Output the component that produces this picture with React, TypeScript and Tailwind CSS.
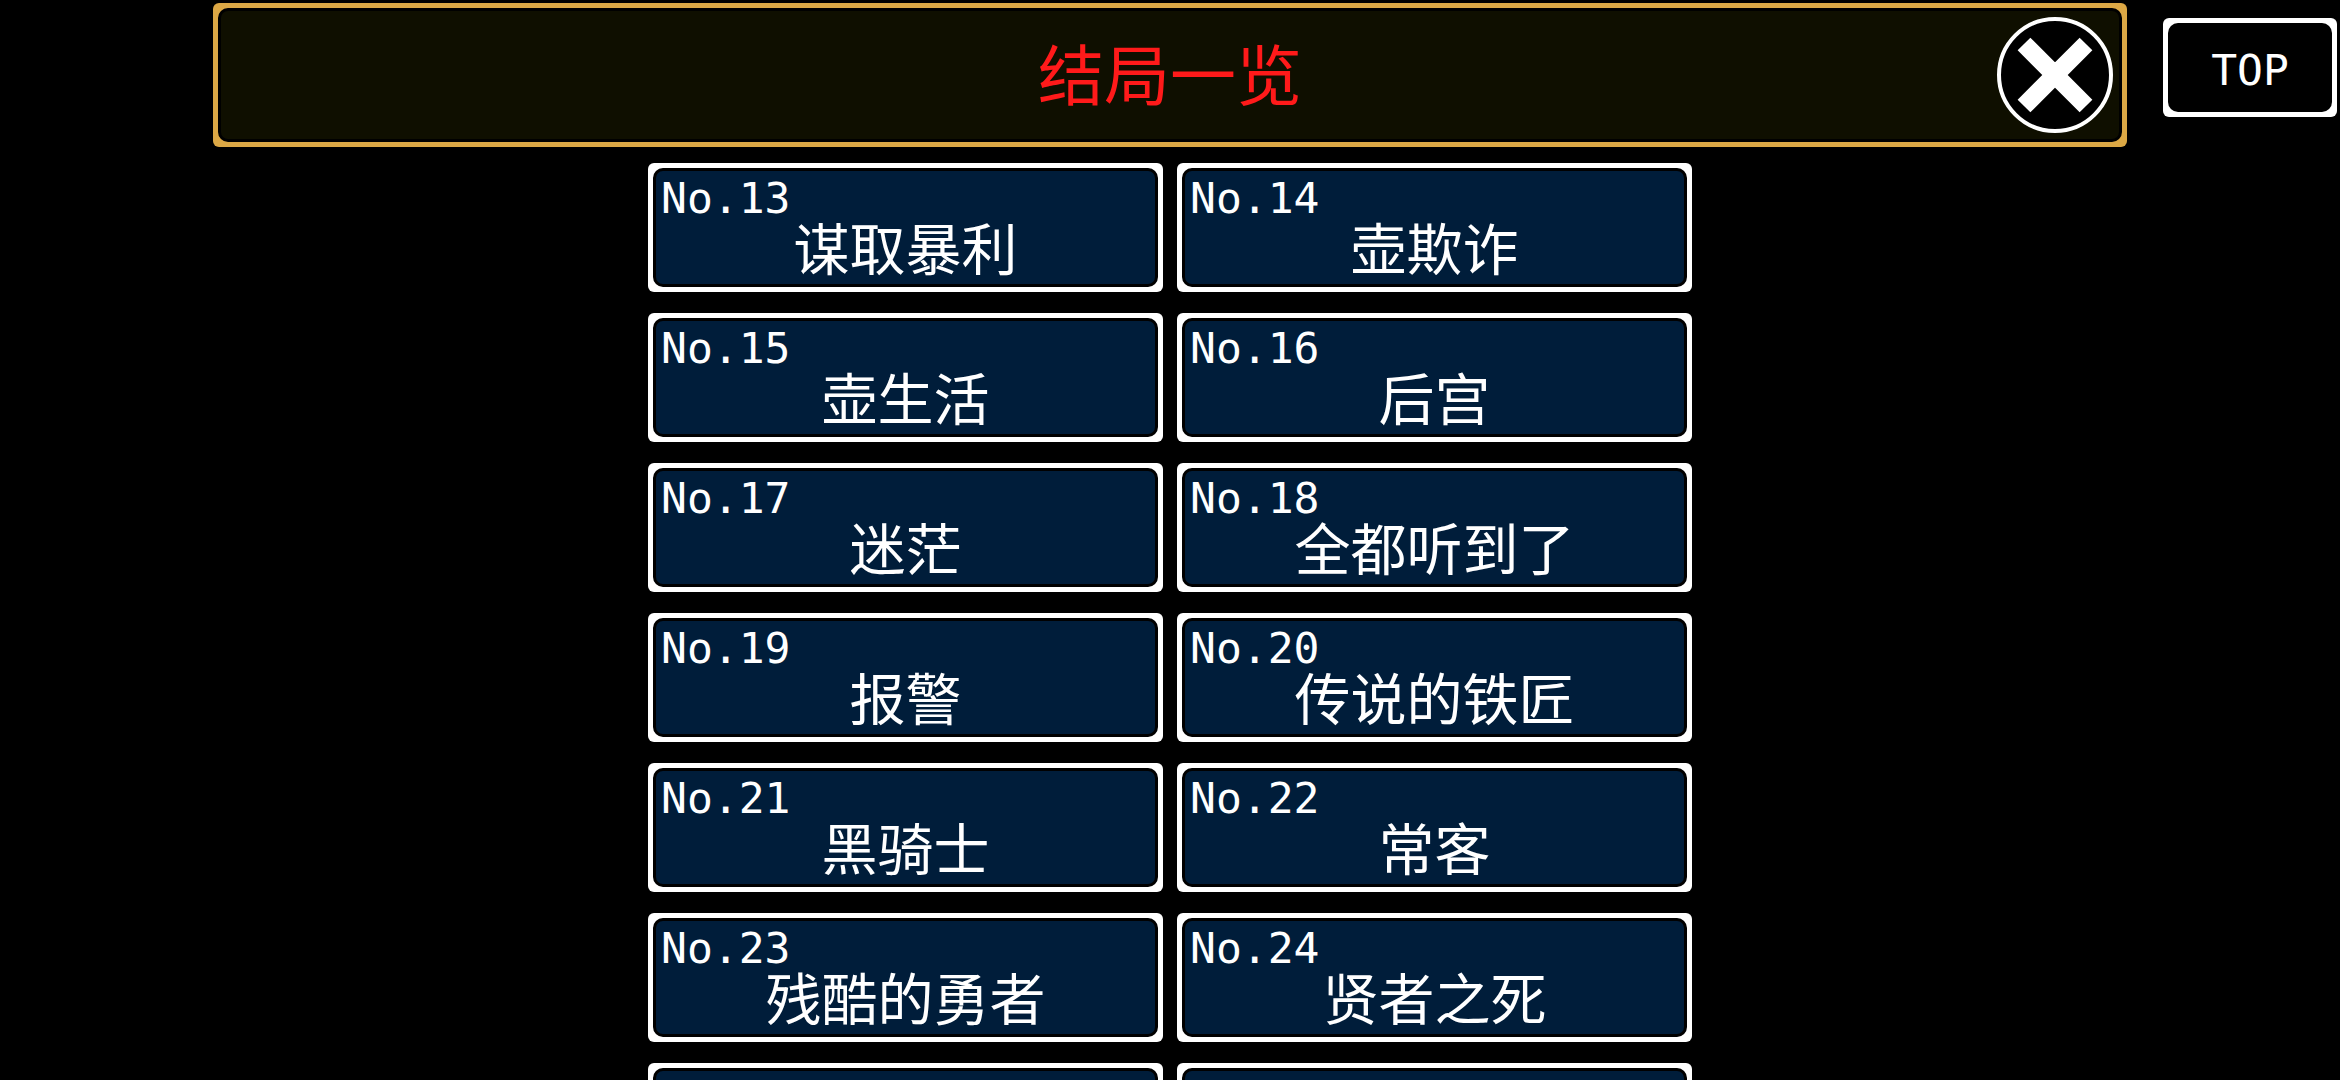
import { useState } from "react";
import type { ReactNode } from "react";

type Ending = {
  no: number;
  title: string;
};

const endings: Ending[] = [
  { no: 13, title: "谋取暴利" },
  { no: 14, title: "壶欺诈" },
  { no: 15, title: "壶生活" },
  { no: 16, title: "后宫" },
  { no: 17, title: "迷茫" },
  { no: 18, title: "全都听到了" },
  { no: 19, title: "报警" },
  { no: 20, title: "传说的铁匠" },
  { no: 21, title: "黑骑士" },
  { no: 22, title: "常客" },
  { no: 23, title: "残酷的勇者" },
  { no: 24, title: "贤者之死" },
  { no: 25, title: "" },
  { no: 26, title: "" },
];

const EndingCard = ({ no, title, onClick }: Ending & { onClick: () => void }) => {
  return (
    <button onClick={onClick} className="block w-full h-[129px] rounded-md bg-white p-[5px]">
      <span className="flex h-full flex-col rounded-[10px] border-[3px] border-black bg-[#001d3a] px-[5px] pt-[7px]">
        <span className="h-10 text-left font-['DejaVu_Sans_Mono',monospace] text-[43px] leading-10">No.{no}</span>
        <span className="h-14 text-center text-[56px] leading-14">{title}</span>
      </span>
    </button>
  );
};

const TitleBar = ({ children }: { children: ReactNode }) => {
  return (
    <header className="mt-[3px] h-36 rounded-md bg-[#dca845] p-[5px]">
      <div className="relative flex h-full items-center justify-center rounded-[10px] border-[3px] border-black bg-[#0f0f00] pb-2">
        {children}
      </div>
    </header>
  );
};

const App = () => {
  const [open, setOpen] = useState(true);
  const [selected, setSelected] = useState<number | null>(null);

  return (
    <div className="flex h-screen flex-col overflow-hidden bg-black text-white font-['Noto_Sans_CJK_SC',sans-serif]">
      <div className="grid grid-cols-[1fr_9fr_1fr]">
        <div></div>
        <TitleBar>
          <h1 className="text-[66px] leading-[66px] text-[#ff1a1a]">结局一览</h1>
          <button onClick={() => setOpen(false)} aria-label="关闭" className="absolute right-1.5 top-1.5 size-[116px]">
            <svg viewBox="0 0 116 116" className="size-full">
              <circle cx="58" cy="58" r="56" fill="#000" stroke="#fff" strokeWidth="4" />
              <path d="M27 27 L89 89 M89 27 L27 89" stroke="#fff" strokeWidth="18" />
            </svg>
          </button>
        </TitleBar>
        <div className="flex justify-end pt-[18px] pr-[3px]">
          <button className="h-[99px] w-[174px] rounded-md bg-white p-[5px]">
            <span className="flex h-full items-center justify-center rounded-[10px] bg-black pt-1 font-['DejaVu_Sans_Mono',monospace] text-[43px] leading-10">TOP</span>
          </button>
        </div>
      </div>

      {open && (
        <main data-selected={selected} className="mx-auto mt-4 grid w-[1044px] grid-cols-2 gap-x-3.5 gap-y-[21px]">
          {endings.map((ending) => (
            <EndingCard key={ending.no} {...ending} onClick={() => setSelected(ending.no)} />
          ))}
        </main>
      )}
    </div>
  );
};

export default App;
